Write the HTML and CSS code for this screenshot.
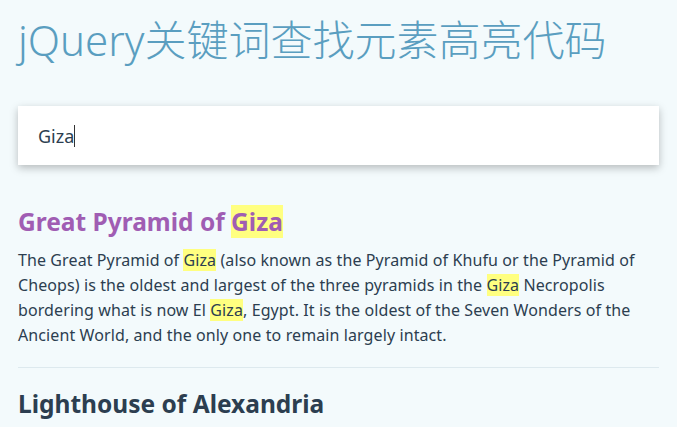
FILE: index.html
```html
<!DOCTYPE html>
<html lang="zh-CN">
<head>
  <meta charset="UTF-8">
  <meta name="viewport" content="width=device-width, initial-scale=1.0">
  <title>jQuery关键词查找元素高亮代码</title>
  <link rel="stylesheet" href="styles.css">
</head>
<body>
  <div id="wrapper">
    <h1>jQuery关键词查找元素高亮代码</h1>
    <div id="searchBox">
      <span class="query">Giza</span><span class="caret"></span>
    </div>
    <div id="list">
      <div class="item">
        <h2 class="match">Great Pyramid of <mark>Giza</mark></h2>
        <p>The Great Pyramid of <mark>Giza</mark> (also known as the Pyramid of Khufu or the Pyramid of Cheops) is the oldest and largest of the three pyramids in the <mark>Giza</mark> Necropolis bordering what is now El <mark>Giza</mark>, Egypt. It is the oldest of the Seven Wonders of the Ancient World, and the only one to remain largely intact.</p>
      </div>
      <div class="item">
        <h2>Lighthouse of Alexandria</h2>
      </div>
    </div>
  </div>
</body>
</html>
```

FILE: styles.css
```css
html, body {
  margin: 0;
  padding: 0;
}
body {
  background: #f3fafc;
  font-family: "Noto Sans", "Noto Sans CJK SC", sans-serif;
  color: #2c3e50;
}
#wrapper {
  padding: 0 18px;
}
h1 {
  margin: 0;
  padding-top: 12px;
  font-size: 42px;
  font-weight: 300;
  line-height: 56px;
  color: #5a9ec0;
}
#searchBox {
  margin-top: 38px;
  height: 59px;
  padding: 0 20px;
  background: white;
  box-shadow: 0 3px 8px rgba(0, 0, 0, 0.25);
  display: flex;
  align-items: center;
  font-size: 18px;
  color: #2c3e50;
}
.caret {
  width: 1px;
  height: 22px;
  background: #333;
}
#list {
  margin-top: 41px;
}
.item {
  border-bottom: 1px solid #dde9ee;
  padding-bottom: 19px;
  margin-bottom: 20px;
}
.item h2 {
  margin: 0 0 10px;
  font-size: 24.5px;
  line-height: 32px;
  font-weight: bold;
}
.item h2.match {
  color: #a05db3;
}
.item p {
  margin: 0;
  font-size: 16px;
  letter-spacing: 0.1px;
  line-height: 25px;
}
mark {
  background: #ffff80;
  color: inherit;
}
```
